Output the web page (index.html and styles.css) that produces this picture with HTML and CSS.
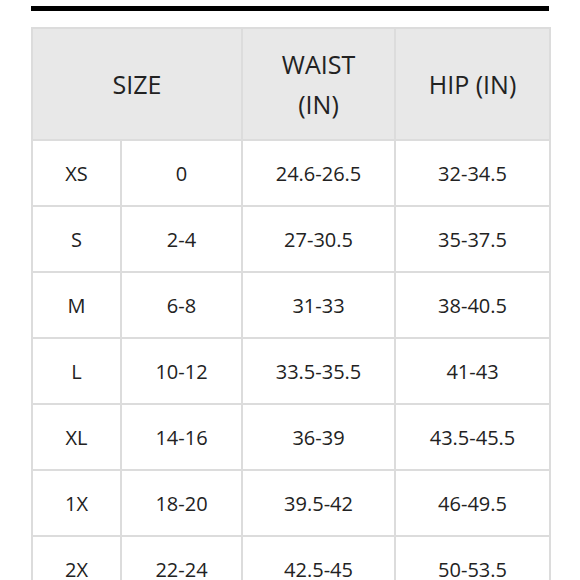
FILE: index.html
```html
<!DOCTYPE html>
<html>
<head>
<meta charset="utf-8">
<link rel="stylesheet" href="styles.css">
</head>
<body>
<div class="page">
  <div class="bar"></div>
  <table class="chart">
    <colgroup>
      <col class="c1"><col class="c2"><col class="c3"><col class="c4">
    </colgroup>
    <thead>
      <tr>
        <th colspan="2">SIZE</th>
        <th>WAIST<br>(IN)</th>
        <th>HIP (IN)</th>
      </tr>
    </thead>
    <tbody>
      <tr><td>XS</td><td>0</td><td>24.6-26.5</td><td>32-34.5</td></tr>
      <tr><td>S</td><td>2-4</td><td>27-30.5</td><td>35-37.5</td></tr>
      <tr><td>M</td><td>6-8</td><td>31-33</td><td>38-40.5</td></tr>
      <tr><td>L</td><td>10-12</td><td>33.5-35.5</td><td>41-43</td></tr>
      <tr><td>XL</td><td>14-16</td><td>36-39</td><td>43.5-45.5</td></tr>
      <tr><td>1X</td><td>18-20</td><td>39.5-42</td><td>46-49.5</td></tr>
      <tr><td>2X</td><td>22-24</td><td>42.5-45</td><td>50-53.5</td></tr>
    </tbody>
  </table>
</div>
</body>
</html>
```

FILE: styles.css
```css
html, body {
  margin: 0;
  padding: 0;
  background: #fff;
}
.page {
  padding-left: 31px;
  padding-top: 6px;
  width: 518px;
  font-family: "Open Sans", "Noto Sans", sans-serif;
  color: #222;
}
.bar {
  height: 5px;
  background: #000;
  margin-bottom: 16px;
}
.chart {
  width: 518px;
  border-collapse: collapse;
  table-layout: fixed;
  border: 2px solid #dcdcdc;
}
.c1 { width: 89px; }
.c2 { width: 121px; }
.c3 { width: 153px; }
.c4 { width: 155px; }
.chart th {
  background: #e8e8e8;
  font-weight: 400;
  font-size: 25px;
  line-height: 40px;
  height: 110px;
  padding: 0;
  border: 2px solid #dcdcdc;
  text-align: center;
  vertical-align: middle;
}
.chart td {
  font-size: 20px;
  height: 64px;
  padding: 0;
  border: 2px solid #dcdcdc;
  text-align: center;
  vertical-align: middle;
}
```
